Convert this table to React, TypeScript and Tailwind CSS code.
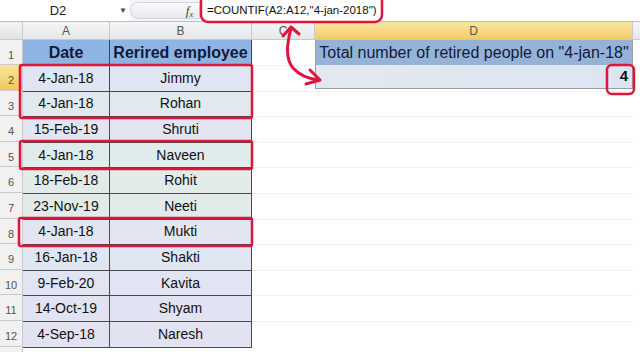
const rows: { n: number; date: string; name: string; tint: string }[] = [
  { n: 2, date: '4-Jan-18', name: 'Jimmy', tint: 'bg-[#dfe5f2]' },
  { n: 3, date: '4-Jan-18', name: 'Rohan', tint: 'bg-[#dfe9ee]' },
  { n: 4, date: '15-Feb-19', name: 'Shruti', tint: 'bg-[#e3e6f1]' },
  { n: 5, date: '4-Jan-18', name: 'Naveen', tint: 'bg-[#e0ebec]' },
  { n: 6, date: '18-Feb-18', name: 'Rohit', tint: 'bg-[#e2ebea]' },
  { n: 7, date: '23-Nov-19', name: 'Neeti', tint: 'bg-[#e2ebea]' },
  { n: 8, date: '4-Jan-18', name: 'Mukti', tint: 'bg-[#e2e5f2]' },
  { n: 9, date: '16-Jan-18', name: 'Shakti', tint: 'bg-[#dfe6f2]' },
  { n: 10, date: '9-Feb-20', name: 'Kavita', tint: 'bg-[#e0e4f3]' },
  { n: 11, date: '14-Oct-19', name: 'Shyam', tint: 'bg-[#e1e3f3]' },
  { n: 12, date: '4-Sep-18', name: 'Naresh', tint: 'bg-[#e1e3f3]' },
];

const RED = '#e0143c';

function RowNum({ n, active }: { n?: number; active?: boolean }) {
  return (
    <div
      className={`flex items-end justify-center pb-[1px] border-b border-r border-[#c9c9c9] text-[11px] text-[#555] ${
        active ? 'bg-gradient-to-b from-[#f9e39a] to-[#f1c95c]' : 'bg-[#f1f1f1]'
      }`}
    >
      {n}
    </div>
  );
}

export default function App() {
  return (
    <div className="relative w-[640px] h-[352px] overflow-hidden bg-white font-['Liberation_Sans',Arial,sans-serif] text-[#111]">
      {/* Formula bar */}
      <div className="flex h-[22px] border-b border-[#b9bec6] bg-[#f3f4f6]">
        <div className="w-[116px] bg-white flex items-center justify-center text-[13px] text-[#222]">D2</div>
        <div className="w-[14px] bg-white flex items-center justify-center text-[8px] text-[#444]">▼</div>
        <div className="w-[70px] flex items-center py-[2px]">
          <div className="h-full w-full rounded-l-full border border-[#d3d6db] bg-gradient-to-b from-[#fbfbfc] to-[#e7e9ec] flex items-center justify-end pr-[6px]">
            <span className="font-['Liberation_Serif',serif] italic text-[13px] text-[#444]">
              f<sub className="text-[8px]">x</sub>
            </span>
          </div>
        </div>
        <div className="flex-1 bg-white flex items-center pl-[7px] text-[11.5px] text-[#111]">
          =COUNTIF(A2:A12,"4-jan-2018")
        </div>
      </div>

      {/* Sheet grid */}
      <div className="grid grid-cols-[23px_87px_142px_63px_318px_7px] grid-rows-[18px_25px_repeat(12,25.6px)]">
        {/* Column headers */}
        <div className="bg-gradient-to-b from-[#f4f4f4] to-[#e3e3e3] border-b border-r border-[#c9c9c9]" />
        {['A', 'B', 'C'].map((c) => (
          <div
            key={c}
            className="flex items-center justify-center text-[12px] text-[#555] bg-gradient-to-b from-[#f6f6f6] to-[#e6e7ea] border-b border-r border-[#c9c9c9]"
          >
            {c}
          </div>
        ))}
        <div className="flex items-center justify-center text-[12px] text-[#555] bg-gradient-to-b from-[#fbe6a3] to-[#f3cd62] border-b border-r border-[#c9c9c9]">
          D
        </div>
        <div className="bg-gradient-to-b from-[#f6f6f6] to-[#e6e7ea] border-b border-[#c9c9c9]" />

        {/* Row 1 */}
        <RowNum n={1} />
        <div className="flex items-center justify-center bg-[#8db4e2] text-[16px] font-bold text-[#111a3a] border-r border-[#444]">
          Date
        </div>
        <div className="flex items-center justify-center bg-[#8db4e2] text-[16px] font-bold text-[#111a3a] border-r border-[#444]">
          Rerired employee
        </div>
        <div className="bg-white" />
        <div className="flex items-center justify-center bg-[#95b3d7] text-[16px] text-[#111a3a] border-l border-r border-[#9aa0aa] whitespace-nowrap">
          Total number of retired people on "4-jan-18"
        </div>
        <div className="bg-white" />

        {rows.map((r) => (
          <div key={r.n} className="contents">
            <RowNum n={r.n} active={r.n === 2} />
            <div className={`flex items-center justify-center text-[14px] border-t border-r border-[#4a4a4a] ${r.tint}`}>
              {r.date}
            </div>
            <div className={`flex items-center justify-center text-[14px] border-t border-r border-[#4a4a4a] ${r.tint}`}>
              {r.name}
            </div>
            <div className="bg-white border-t border-[#f3f2f7]" />
            {r.n === 2 ? (
              <div className="flex items-center justify-end pr-[4px] bg-gradient-to-r from-[#e4e8ee] to-[#dbe5f1] border border-t-0 border-[#9aa0aa] text-[15px] font-bold h-[24px]">
                4
              </div>
            ) : (
              <div className="bg-white border-t border-[#f3f2f7]" />
            )}
            <div className="bg-white" />
          </div>
        ))}

        {/* Row 13 (cut off at the bottom edge) */}
        <RowNum />
        <div className="bg-white border-t border-[#4a4a4a]" />
        <div className="bg-white border-t border-[#4a4a4a]" />
        <div className="bg-white" />
        <div className="bg-white" />
        <div className="bg-white" />
      </div>

      {/* Red annotations */}
      <svg className="absolute left-0 top-0 pointer-events-none" width={640} height={352} viewBox="0 0 640 352" fill="none">
        <g stroke={RED} strokeWidth={2.5} strokeLinecap="round" strokeLinejoin="round">
          <rect x={201} y={-6} width={181} height={28} rx={7} />
          <rect x={20} y={65} width={232} height={53} rx={2} />
          <rect x={20} y={141} width={232} height={28} rx={2} />
          <rect x={19} y={218} width={233} height={28} rx={2} />
          <rect x={607} y={65} width={27} height={29} rx={5} />
          <path d="M291 28 C 287 44, 285 58, 293 68 C 300 76, 310 79, 319 80" strokeWidth={3} />
          <path d="M283 36 L291 27 L299 34" strokeWidth={3} />
          <path d="M310 70 L320 80 L306 84" strokeWidth={3} />
        </g>
      </svg>
    </div>
  );
}
